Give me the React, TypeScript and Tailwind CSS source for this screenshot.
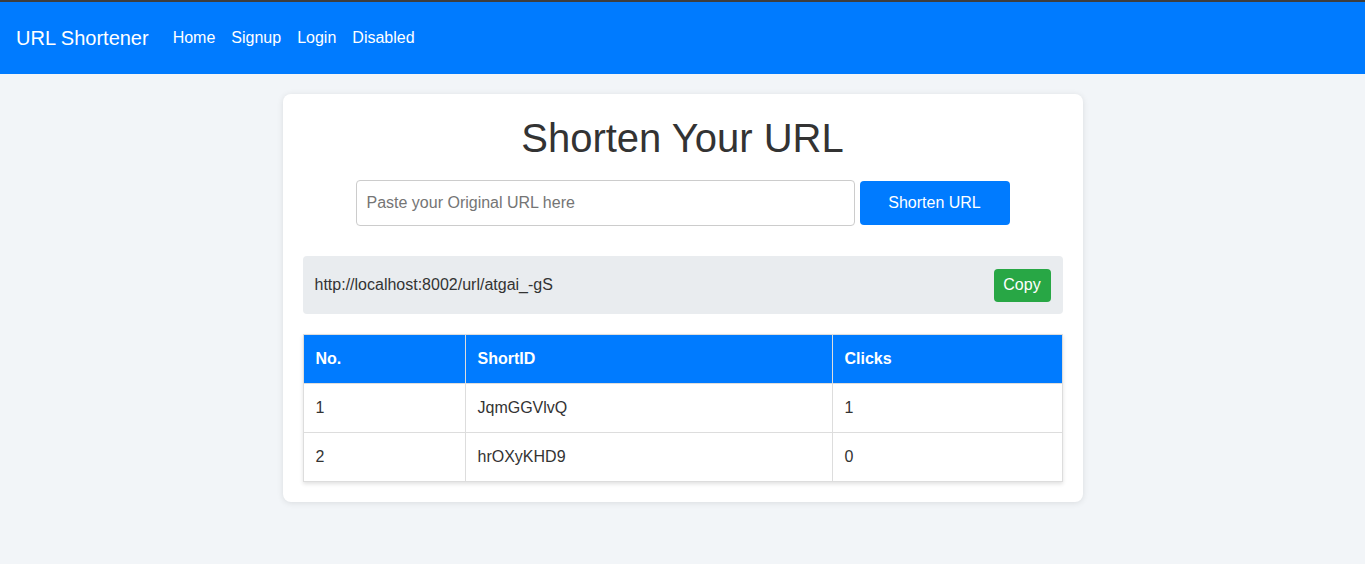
import React, { useState } from 'react';

const rows = [
  { no: 1, shortId: 'JqmGGVlvQ', clicks: 1 },
  { no: 2, shortId: 'hrOXyKHD9', clicks: 0 },
];

export default function App() {
  const [url, setUrl] = useState('');

  return (
    <div className="min-h-[564px] bg-[#f2f5f8] font-['Liberation_Sans',Arial,sans-serif] text-[#333]">
      <nav className="h-[74px] bg-[#007bff] border-t-2 border-[#3d3d3d] flex items-center px-4 text-white">
        <span className="text-[20px] mr-6">URL Shortener</span>
        <div className="flex gap-4 text-[16px]">
          <a href="#">Home</a>
          <a href="#">Signup</a>
          <a href="#">Login</a>
          <a href="#">Disabled</a>
        </div>
      </nav>

      <main className="flex justify-center pt-5">
        <div className="w-[800px] bg-white rounded-lg shadow-[0_1px_6px_rgba(0,0,0,0.1)] p-5">
          <h1 className="text-[40px] leading-[48px] text-center text-[#333]">Shorten Your URL</h1>

          <div className="flex justify-center gap-[5px] mt-[18px]">
            <input
              type="text"
              placeholder="Paste your Original URL here"
              value={url}
              onChange={(e) => setUrl(e.target.value)}
              className="w-[499px] h-[46px] px-[10px] border border-[#ccc] rounded text-[16px] placeholder:text-[#757575] outline-none"
            />
            <button className="w-[150px] h-[44px] mt-px bg-[#007bff] text-white rounded text-[16px]">
              Shorten URL
            </button>
          </div>

          <div className="mt-[30px] h-[58px] bg-[#e9ecef] rounded flex items-center justify-between pl-3 pr-[12px]">
            <span className="text-[16px]">http://localhost:8002/url/atgai_-gS</span>
            <button className="h-[33px] w-[57px] bg-[#28a745] text-white rounded text-[16px]">Copy</button>
          </div>

          <table className="mt-5 w-[760px] border-collapse text-[16px] shadow-[0_2px_4px_rgba(0,0,0,0.12)]">
            <thead>
              <tr className="bg-[#007bff] text-white h-[49px]">
                <th className="w-[162px] text-left font-bold px-3 border border-[#ddd]">No.</th>
                <th className="w-[367px] text-left font-bold px-3 border border-[#ddd]">ShortID</th>
                <th className="text-left font-bold px-3 border border-[#ddd]">Clicks</th>
              </tr>
            </thead>
            <tbody>
              {rows.map((r) => (
                <tr key={r.no} className="h-[49px]">
                  <td className="px-3 border border-[#ddd]">{r.no}</td>
                  <td className="px-3 border border-[#ddd]">{r.shortId}</td>
                  <td className="px-3 border border-[#ddd]">{r.clicks}</td>
                </tr>
              ))}
            </tbody>
          </table>
        </div>
      </main>
    </div>
  );
}
